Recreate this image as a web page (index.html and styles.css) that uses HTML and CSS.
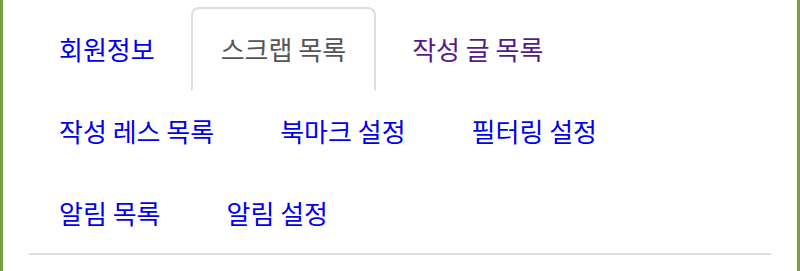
FILE: index.html
```html
<!DOCTYPE html>
<html>
<head>
    <meta charset="utf-8">
    <link rel="stylesheet" href="styles.css">
</head>
<body>
    <div class="page">
        <!-- Member menu tabs -->
        <ul class="nav-tabs">
            <li><a href="#info">회원정보</a></li>
            <li class="active"><a href="#scrap">스크랩 목록</a></li>
            <li><a class="visited" href="#posts">작성 글 목록</a></li>
            <li><a href="#replies">작성 레스 목록</a></li>
            <li><a href="#bookmark">북마크 설정</a></li>
            <li><a href="#filter">필터링 설정</a></li>
            <li><a href="#alarms">알림 목록</a></li>
            <li><a href="#alarm-settings">알림 설정</a></li>
        </ul>
    </div>
</body>
</html>
```

FILE: styles.css
```css
html, body {
    margin: 0;
    background-color: #fff;
}

body {
    font-family: "Noto Sans CJK KR", "Noto Sans", sans-serif;
}

.page {
    height: 271px;
    box-sizing: border-box;
    border-left: 3px solid #78a046;
    border-right: 3px solid #78a046; /* green frame */
    padding: 7px 26px 0 26px;
}

.nav-tabs {
    display: flex;
    flex-wrap: wrap;
    column-gap: 6px;
    list-style: none;
    margin: 0;
    padding: 0;
    border-bottom: 2px solid #dedede;
}

.nav-tabs li {
    margin-bottom: -2px;
}

.nav-tabs a {
    display: block;
    padding: 23px 28px;
    font-size: 26px;
    line-height: 34px;
    color: #0000ee;
    text-decoration: none;
    border: 2px solid transparent;
    border-radius: 8px 8px 0 0;
}

.nav-tabs a.visited {
    color: #551a8b;
}

/* Active tab */
.nav-tabs .active a {
    color: #555;
    border-color: #dedede #dedede transparent;
    background-color: #fff;
}
```
